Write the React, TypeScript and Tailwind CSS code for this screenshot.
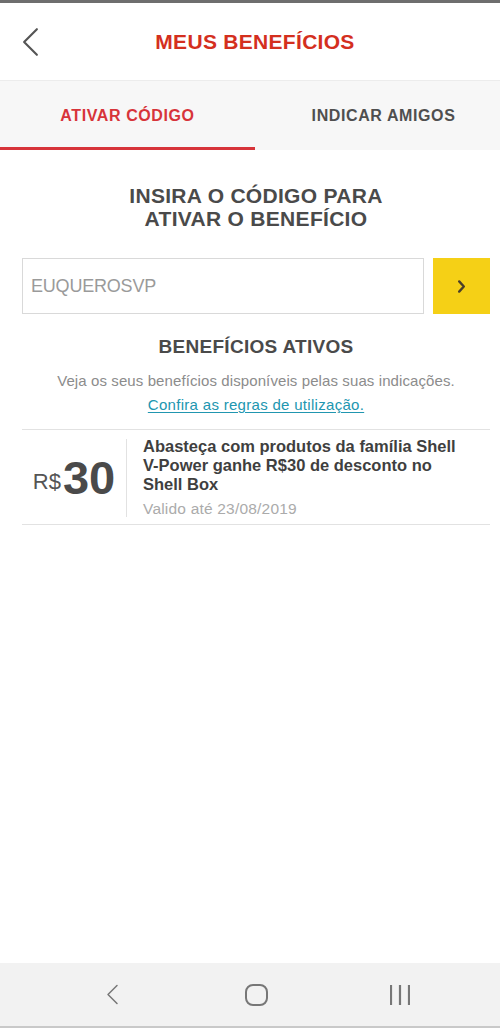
import React from "react";

const FONT = { fontFamily: '"Liberation Sans", Arial, sans-serif' };

function Chevron({ className, dir = "left", width = 2 }: { className?: string; dir?: "left" | "right"; width?: number }) {
  return (
    <svg viewBox="0 0 16 28" className={className} fill="none" stroke="currentColor" strokeWidth={width} strokeLinecap="round" strokeLinejoin="round">
      {dir === "left" ? <path d="M14 2 2 14l12 12" /> : <path d="M3 3l10 11L3 25" />}
    </svg>
  );
}

export default function App() {
  return (
    <div className="flex h-[1028px] w-[500px] flex-col bg-white" style={FONT}>
      <div className="h-[3px] bg-[#6e6e6e]" />
      <header className="relative flex h-[78px] items-center justify-center border-b border-[#ececec] pl-[10px]">
        <button className="absolute left-[22px] top-[24px] text-[#555]">
          <Chevron className="h-[30px] w-[17px]" />
        </button>
        <h1 className="text-[21px] font-bold tracking-[0.3px] text-[#d42f1e]">MEUS BENEFÍCIOS</h1>
      </header>

      <nav className="flex h-[69px] bg-[#f7f7f7]">
        <div className="flex w-[255px] items-center justify-center border-b-[3px] border-[#d7343a] pt-[3px]">
          <span className="text-[16px] font-bold tracking-[0.6px] text-[#d7343a]">ATIVAR CÓDIGO</span>
        </div>
        <div className="flex flex-1 items-center justify-center border-b-[3px] border-transparent pl-[12px] pt-[3px]">
          <span className="text-[16px] font-bold tracking-[0.6px] text-[#4f4f4f]">INDICAR AMIGOS</span>
        </div>
      </nav>

      <main className="flex flex-col pl-[22px] pr-[10px] pt-[34px]">
        <h2 className="text-center text-[21px] font-bold leading-[23px] tracking-[0.3px] text-[#4a4a4a]">
          INSIRA O CÓDIGO PARA
          <br />
          ATIVAR O BENEFÍCIO
        </h2>

        <div className="mt-[28px] flex gap-[9px]">
          <div className="flex h-[56px] flex-1 items-center border border-[#d9d9d9] px-[8px]">
            <span className="text-[18px] tracking-[-0.2px] text-[#9a9a9a]">EUQUEROSVP</span>
          </div>
          <button className="flex h-[56px] w-[57px] items-center justify-center bg-[#f5d016] text-[#4a3f2a]">
            <Chevron dir="right" width={5} className="h-[13px] w-[9px]" />
          </button>
        </div>

        <h3 className="mt-[19px] text-center text-[19px] font-bold tracking-[0.3px] text-[#4a4a4a]">BENEFÍCIOS ATIVOS</h3>
        <p className="mt-[8px] text-center text-[15px] tracking-[0.1px] text-[#8c8c8c]">
          Veja os seus benefícios disponíveis pelas suas indicações.
        </p>
        <a className="mt-[2px] self-center text-[15px] tracking-[0.3px] text-[#2196b0] underline underline-offset-2">
          Confira as regras de utilização.
        </a>

        <div className="mt-[12px] flex border-y border-[#e2e2e2] pb-[4px] pt-[6px]">
          <div className="my-[3px] flex w-[105px] items-center justify-center border-r border-[#e2e2e2]">
            <span className="mt-[8px] text-[22px] text-[#555]">R$</span>
            <span className="ml-[2px] text-[47px] font-bold leading-none text-[#4a4a4a]">30</span>
          </div>
          <div className="flex flex-1 flex-col pl-[16px] pt-[1px]">
            <p className="text-[16.5px] font-bold leading-[19px] text-[#3f3f3f]">
              Abasteça com produtos da família Shell
              <br />
              V-Power ganhe R$30 de desconto no
              <br />
              Shell Box
            </p>
            <p className="mt-[3px] text-[15.5px] tracking-[0.2px] text-[#ababab]">Valido até 23/08/2019</p>
          </div>
        </div>
      </main>

      <div className="flex-1" />
      <footer className="flex h-[65px] items-center border-b-[2px] border-[#c9c9c9] bg-[#f2f2f2] pl-[106px] text-[#777]">
        <Chevron className="h-[21px] w-[13px]" />
        <div className="ml-[126px] h-[22px] w-[23px] rounded-[8px] border-[2.5px] border-[#777]" />
        <svg viewBox="0 0 20 20" className="ml-[122px] h-[20px] w-[20px]" stroke="currentColor" strokeWidth={2.2}>
          <path d="M1 0v20M10 0v20M19 0v20" />
        </svg>
      </footer>
    </div>
  );
}
